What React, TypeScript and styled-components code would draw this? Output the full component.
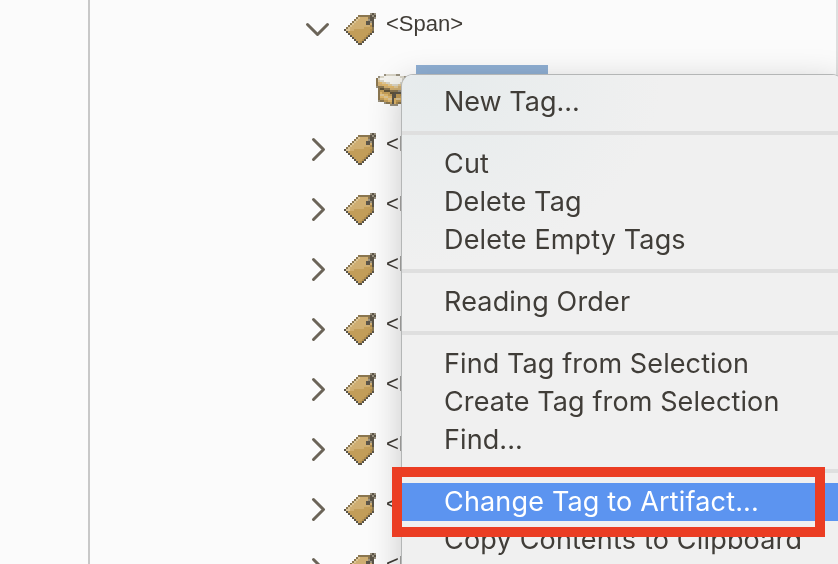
import React from 'react';
import styled, { createGlobalStyle } from 'styled-components';

const Global = createGlobalStyle`
  body { margin: 0; overflow: hidden; background: #fbfbfb; }
`;

const Window = styled.div`
  position: relative;
  display: flex;
  width: 838px;
  height: 564px;
  overflow: hidden;
  background: #fbfbfb;
`;

const Gutter = styled.div`
  box-sizing: border-box;
  flex: none;
  width: 90px;
  border-right: 2px solid #c8c8c8;
`;

const Tree = styled.div`
  flex: 1;
  box-sizing: border-box;
  border-right: 2px solid #dedede;
  display: flex;
  flex-direction: column;
  will-change: transform;
`;

const Row = styled.div<{ $indent: number }>`
  flex: none;
  display: flex;
  height: 60px;
  padding-left: ${(p) => p.$indent}px;
`;

const Toggle = styled.svg`
  flex: none;
  width: 26px;
  height: 26px;
  margin-top: 16px;
  fill: none;
  stroke: #6b6458;
  stroke-width: 3;
  stroke-linecap: round;
  stroke-linejoin: round;
`;

const Icon = styled.svg<{ $gap: number; $top: number }>`
  flex: none;
  width: 32px;
  height: 32px;
  margin: ${(p) => p.$top}px 0 0 ${(p) => p.$gap}px;
`;

const Label = styled.span`
  margin: 11px 0 0 10px;
  font: 22px/26px 'Liberation Sans', sans-serif;
  color: #403c36;
  white-space: nowrap;
`;

const Selection = styled.div`
  width: 132px;
  height: 40px;
  margin: 5px 0 0 8px;
  background: #8fafd3;
`;

const Menu = styled.div`
  position: absolute;
  left: 402px;
  top: 75px;
  box-sizing: border-box;
  width: 441px;
  height: 520px;
  padding-top: 8px;
  border-radius: 11px 11px 0 0;
  background: radial-gradient(ellipse 230px 190px at 30px 0, #e6ebec, #f0f0f0);
  box-shadow: 0 0 0 1px #b4b6b6, 0 8px 34px rgba(0, 0, 0, 0.22);
`;

const Item = styled.div<{ $active?: boolean; $track: number }>`
  height: 38px;
  padding-left: 42px;
  font: 27px/37px Inter, sans-serif;
  letter-spacing: ${(p) => p.$track}px;
  white-space: nowrap;
  color: ${(p) => (p.$active ? '#fff' : '#403d38')};
  background: ${(p) => (p.$active ? '#5c94f0' : 'transparent')};
`;

const Separator = styled.div`
  height: 4px;
  margin: 10px 0;
  background: #dfdfdf;
`;

const Highlight = styled.div`
  position: absolute;
  left: 392px;
  top: 467px;
  box-sizing: border-box;
  width: 433px;
  height: 70px;
  border: 10px solid #eb3d23;
`;

const palette: Record<string, string> = {
  k: '#5c5548',
  d: '#8a7650',
  g: '#99917f',
  t: '#c29d59',
  s: '#b08c4c',
  l: '#cfae72',
  h: '#dcc596',
  w: '#f4f3ee',
  v: '#d8d4c6',
  o: '#dfb66a',
  m: '#5f5238',
};

const tagPixels = [
  '.............gkg',
  '.......ddddddkgk',
  '......dhlllldkkg',
  '.....dhlllllgkk.',
  '....dhlllllkkgk.',
  '...dhllllllkklk.',
  '..dhlllllllllsk.',
  '.dhlllllllttttd.',
  'khhllttttttttsd.',
  '.ktttttttttttsk.',
  '..ktttttttttsk..',
  '...ktttttttsk...',
  '....ktttttsk....',
  '.....ktttsk.....',
  '......ktsk......',
  '.......kk.......',
];

const boxPixels = [
  '....gvvvvvgg....',
  '.gvvwwwwwwwwvvg.',
  'dvwwwwwwwwwwwvvg',
  'dhvvwwwwwwwwwvvd',
  'dlohhvvwwwwwvhod',
  'dllooohhvvvhholg',
  'gdddllooohhlllog',
  '.dmmdddllllllogg',
  '.dttmmmddddggkk.',
  '.dottttmmkkkkkk.',
  '.dhhoottkkttssk.',
  '.doohhookktttsk.',
  '.dttoohhkohhosk.',
  '.gddttookotttsk.',
  '....gddtkosddd..',
  '.......gggg.....',
];

const PixelIcon = ({ rows, gap, top }: { rows: string[]; gap: number; top: number }) => (
  <Icon viewBox="0 0 16 16" shapeRendering="crispEdges" $gap={gap} $top={top}>
    {rows.flatMap((row, y) =>
      [...row].map((c, x) =>
        c === '.' ? null : <rect key={`${x}-${y}`} x={x} y={y} width="1" height="1" fill={palette[c]} />,
      ),
    )}
  </Icon>
);

const groups: [string, number, boolean?][][] = [
  [['New Tag...', 0]],
  [['Cut', 0.2], ['Delete Tag', 0.1], ['Delete Empty Tags', 0.14]],
  [['Reading Order', 0.16]],
  [['Find Tag from Selection', 0.1], ['Create Tag from Selection', 0.11], ['Find...', 0.1]],
  [['Change Tag to Artifact...', 0.17, true], ['Copy Contents to Clipboard', 0.19]],
];

const TagRow = ({ open, label }: { open?: boolean; label: string }) => (
  <Row $indent={215}>
    <Toggle viewBox="0 0 26 26">
      <path d={open ? 'M2.5 8.5 12.5 18.5 22.5 8.5' : 'M8.5 3.5 18.5 13.5 8.5 23.5'} />
    </Toggle>
    <PixelIcon rows={tagPixels} gap={13} top={13} />
    <Label>{label}</Label>
  </Row>
);

export default function App() {
  return (
    <>
      <Global />
      <Window>
        <Gutter />
        <Tree>
          <TagRow open label="<Span>" />
          <Row $indent={286}>
            <PixelIcon rows={boxPixels} gap={0} top={14} />
            <Selection />
          </Row>
          {Array.from({ length: 8 }, (_, i) => (
            <TagRow key={i} label="<P>" />
          ))}
        </Tree>
        <Menu>
          {groups.map((items, i) => (
            <React.Fragment key={i}>
              {i > 0 && <Separator />}
              {items.map(([text, track, active]) => (
                <Item key={text} $track={track} $active={active}>
                  {text}
                </Item>
              ))}
            </React.Fragment>
          ))}
        </Menu>
        <Highlight />
      </Window>
    </>
  );
}
